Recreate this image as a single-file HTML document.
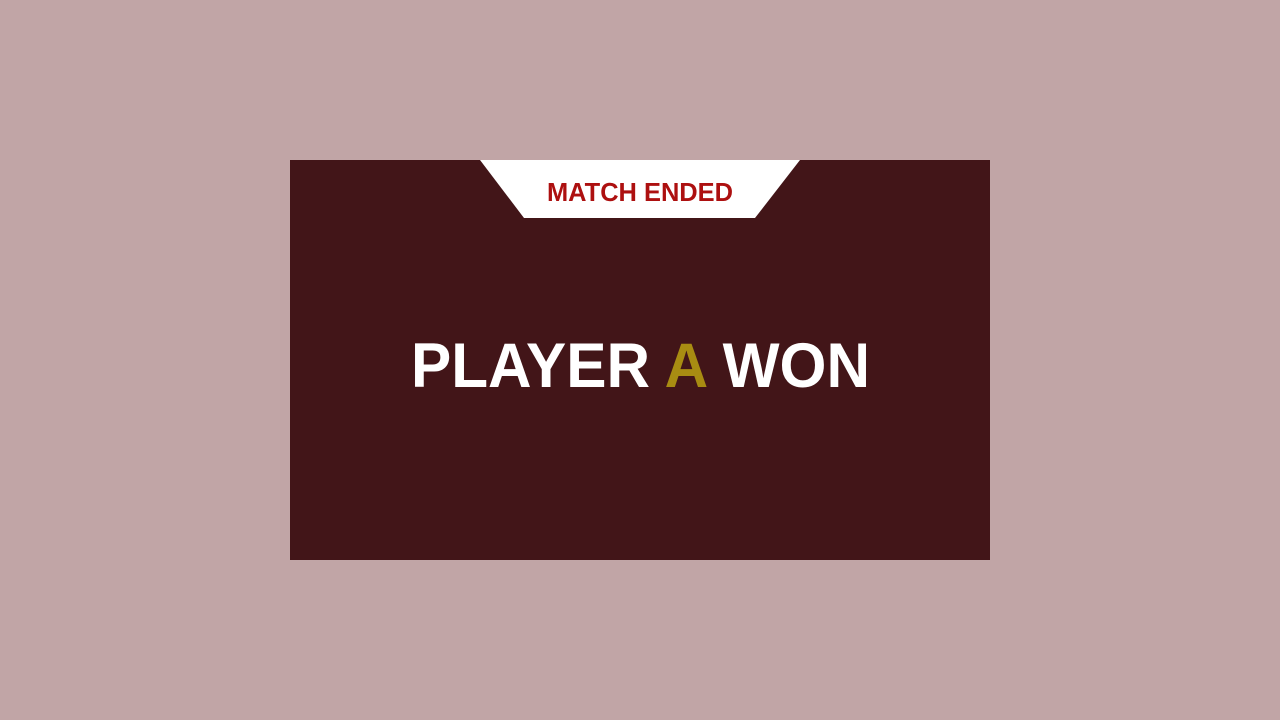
<!DOCTYPE html>
<html><head><style>html,body{margin:0;padding:0;background:#c1a5a6;width:1280px;height:720px;overflow:hidden}</style></head>
<body>
<svg width="1280" height="720" style="position:absolute;left:0;top:0">
<rect x="0" y="0" width="1280" height="720" fill="#c1a5a6"/>
<rect x="290" y="160" width="700" height="400" fill="#421518"/>
<polygon points="480,160 800,160 755,218 524,218" fill="#ffffff"/>
<text x="547" y="201" textLength="186" lengthAdjust="spacingAndGlyphs" font-family="Liberation Sans, sans-serif" font-weight="bold" font-size="26" fill="#ad1010">MATCH ENDED</text>
<text x="411" y="387" textLength="459" lengthAdjust="spacingAndGlyphs" font-family="Liberation Sans, sans-serif" font-weight="bold" font-size="63" fill="#ffffff">PLAYER <tspan fill="#a88c12">A</tspan> WON</text>
</svg>
</body></html>
